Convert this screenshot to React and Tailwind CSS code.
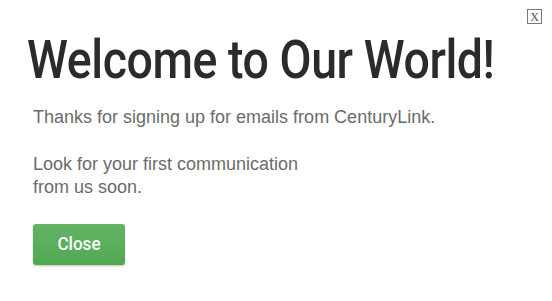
export default function App() {
  return (
    <div className="relative w-[552px] h-[301px] bg-white overflow-hidden">
      <button className="absolute left-[527px] top-[9px] w-[15px] h-[15px] border border-[#777] flex items-center justify-center text-[12px] leading-none text-[#555] font-['Liberation_Serif',serif]">X</button>
      <div className="pl-[33px] pt-[30px]">
        <h1 className="origin-left scale-x-[0.877] whitespace-nowrap text-[53px] leading-[60px] font-medium text-[#2b2b2b] font-['Roboto',sans-serif] tracking-[-0.5px] -ml-[6px]">
          Welcome to Our World!
        </h1>
        <div className="mt-[16px] font-['Liberation_Sans',Arial,sans-serif] text-[18px] leading-[23px] text-[#6b6b6b]">
          <p>Thanks for signing up for emails from CenturyLink.</p>
          <p className="mt-[24px]">Look for your first communication<br />from us soon.</p>
        </div>
        <button className="mt-[25px] w-[92px] h-[41px] rounded-[3px] bg-gradient-to-b from-[#63b466] to-[#50a851] shadow-[0_1px_2px_rgba(0,0,0,0.25)] text-white text-[19px] font-medium font-['Roboto',sans-serif] flex items-center justify-center">
          <span className="origin-center scale-x-[0.9]">Close</span>
        </button>
      </div>
    </div>
  );
}
